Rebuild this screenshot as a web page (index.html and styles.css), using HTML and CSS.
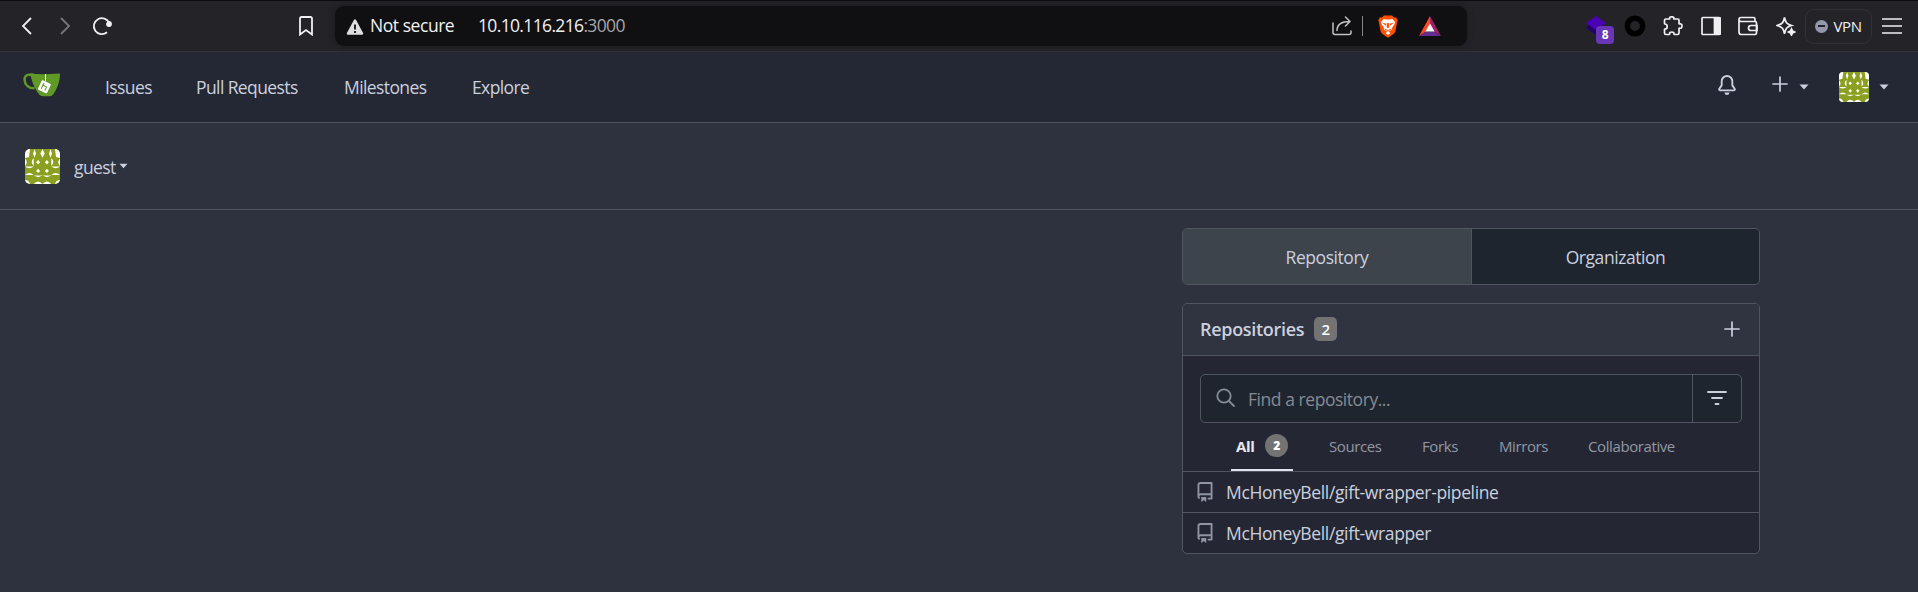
FILE: index.html
```html
<!DOCTYPE html>
<html lang="en">
<head>
<meta charset="utf-8">
<title>guest - Dashboard - Gitea</title>
<link rel="stylesheet" href="styles.css">
</head>
<body>
<svg class="defs" width="0" height="0">
  <symbol id="avatar" viewBox="0 0 35 35">
    <rect width="35" height="35" fill="#8ba021"/>
    <g fill="#fff">
      <path d="M0 0H5L4 8 0 9zM35 0H30L31 8 35 9zM9.500 0l1.500 4.500-1.500 4.300-1.500-4.300zM17.500 0l2.200 4.400-2.200 4.400-2.200-4.400zM25.500 0l1.500 4.500-1.500 4.300-1.500-4.300z"/>
      <path d="M0 9.500q3.500 3.500 0 7.500zM35 9.500q-3.500 3.500 0 7.500zM8.700 9q-4 4 0 8zM26.300 9q4 4 0 8zM0 17.500h8.700q-4.300 3.500-8.700 0zM26.300 17.500H35q-4.300 3.500-8.700 0z"/>
      <path d="M13.100 11l2 2.200-2 2.200-2-2.200zM21.900 11l2 2.200-2 2.200-2-2.200zM13.100 19.700l2 2.200-2 2.200-2-2.200zM21.900 19.700l2 2.200-2 2.200-2-2.200z"/>
      <path d="M0 26q4.400-4 8.700 0zM26.300 26q4.400-4 8.700 0zM8.700 26.500h8.800l-4.400 1.800zM17.500 26.500h8.800l-4.400 1.800zM0 31q4 0 5 4H0zM35 31q-4 0-5 4h5zM8.700 35q4.400-5 8.800 0zM17.500 35q4.400-5 8.800 0z"/>
    </g>
  </symbol>
  <symbol id="repo" viewBox="0 0 16 16"><path d="M2 2.500A2.500 2.500 0 0 1 4.500 0h8.750a.75.75 0 0 1 .75.750v12.500a.75.75 0 0 1-.75.750h-2.500a.75.75 0 0 1 0-1.500h1.750v-2h-8a1 1 0 0 0-.714 1.700.75.75 0 1 1-1.072 1.050A2.495 2.495 0 0 1 2 11.500Zm10.500-1h-8a1 1 0 0 0-1 1v6.708A2.486 2.486 0 0 1 4.500 9h8ZM5 12.250a.25.25 0 0 1 .25-.25h3.500a.25.25 0 0 1 .25.250v3.250a.25.25 0 0 1-.4.200l-1.450-1.087a.249.249 0 0 0-.3 0L5.400 15.700a.25.25 0 0 1-.4-.2Z"/></symbol>
  <symbol id="plus" viewBox="0 0 16 16"><path d="M8 1v14M1 8h14" stroke="currentColor" stroke-width="1.700" stroke-linecap="round"/></symbol>
  <symbol id="caret" viewBox="0 0 10 6"><path d="M.5.500h9L5 5.500z" fill="currentColor"/></symbol>
</svg>

<header class="browser">
  <div class="browser-nav">
    <svg class="back" width="12" height="20" viewBox="0 0 12 20"><path d="M10 2 2 10l8 8"/></svg>
    <svg class="forward" width="12" height="20" viewBox="0 0 12 20"><path d="m2 2 8 8-8 8"/></svg>
    <svg class="reload" width="22" height="22" viewBox="0 0 22 22"><path d="M16 17.300A8 8 0 1 1 18.200 8"/><circle cx="18" cy="9" r="2" fill="#f0f0f2"/></svg>
    <svg class="bookmark" width="16" height="20" viewBox="0 0 16 20"><path d="M3.500 1h9A1.500 1.500 0 0 1 14 2.500V18.500l-6-4.500-6 4.500v-16A1.500 1.500 0 0 1 3.500 1z"/></svg>
  </div>
  <div class="address">
    <svg class="warning" width="18" height="18" viewBox="0 0 18 18"><path d="M9 2.500 16 15.500H2z" fill="#dedee2" stroke="#dedee2" stroke-width="2.500" stroke-linejoin="round"/><path d="M9 6.500v5M9 13v2" stroke="#101012" stroke-width="1.800"/></svg>
    <span class="security">Not secure</span>
    <span class="url">10.10.116.216<span class="port">:3000</span></span>
    <div class="address-actions">
      <svg width="20" height="20" viewBox="0 0 20 20" fill="none" stroke="#c2c2c5" stroke-width="1.500" stroke-linecap="round" stroke-linejoin="round"><path d="M1 7v9.500Q1 18.500 3 18.500H17q2 0 2-2V15"/><path d="M5 14.500Q5 5.500 18 5.500M13.500 1 18 5.500 13.500 10"/></svg>
      <i class="separator"></i>
      <svg class="brave" width="20" height="23" viewBox="0 0 20 23"><path d="M6 .5h8l2 2 2-.2 1.700 3-.8 3-1.600 8.500-2 2.500L10 22.700l-5.300-3.400-2-2.500L1.100 8.300l-.8-3L2 2.300l2 .2z" fill="#ff5000"/><path d="m5.500 4 3 .5h3l3-.5 2.500 3-.5 2-2.500 4 .2 2-2 .5-2.200 1.500-2.200-1.500-2-.5.200-2-2.500-4L3 7zM7.500 18l2.500-1.500 2.500 1.500-2.500 2z" fill="#fff"/><path d="m4 7.500 4.500 1.200-.8 2zM16 7.500l-4.500 1.200.8 2zM9.200 8h1.600l.7 4-1.500 1.300L8.500 12z" fill="#ff5000"/><path d="M6.500 14 10 15.500l3.500-1.500" stroke="#ff5000" fill="none"/></svg>
      <svg class="bat" width="22" height="20" viewBox="0 0 22 20"><path d="M11 0 0 20l7-4.500 4-7z" fill="#ff4724"/><path d="m11 0 11 20-7-4.500-4-7z" fill="#9e1f63"/><path d="m0 20 7-4.500h8l7 4.500z" fill="#662d91"/><path d="m11 7.500 4.600 8H6.400z" fill="#fff"/></svg>
    </div>
  </div>
  <div class="extensions">
    <span class="layers"><svg width="20" height="20" viewBox="0 0 20 20"><path d="m0 12 3-3 7 3 7-3 3 3-10 7z" fill="#24006e"/><path d="m10 0 10 7-10 7L0 7z" fill="#4b02b4"/></svg><b>8</b></span>
    <svg width="22" height="22" viewBox="0 0 22 22"><circle cx="11" cy="11" r="7.700" fill="none" stroke="#000" stroke-width="5.500"/></svg>
    <svg class="line" width="20" height="20" viewBox="0 0 20 20"><path d="M3 3h3.500q.5 0 .3-.5C6.300 1 7.800.8 8.800.8s2.700.4 2 1.700q-.2.500.4.500H15q1 0 1 1v3.500q0 .5.500.4C18 7.400 19 8.500 19 10s-1 2.700-2.500 2.100q-.5-.1-.5.400V17q0 1.500-1.500 1.500h-3q-.5 0-.5-.5c.2-1.300-.8-2-2.200-2s-2.300.7-2.200 2q0 .5-.6.500H3q-1.500 0-1.500-1.500v-3.500q0-.5.500-.5c1.500 0 2.200-1 2.200-2.300S3.500 8 2 8q-.5 0-.5-.5v-3Q1.500 3 3 3z"/></svg>
    <svg class="line" width="20" height="20" viewBox="0 0 20 20"><rect x="1" y="1.500" width="18" height="17" rx="1"/><path d="M13.500 2H19v16h-5.500z" fill="#f0f0f2"/></svg>
    <svg class="line" width="20" height="20" viewBox="0 0 20 20"><path d="M17 6V3q0-1.500-1.500-1.500H3Q1 1.500 1 3.500V16q0 2.500 2.500 2.500h13.500q1.500 0 1.500-1.500V7q0-1.500-1.500-1.500H3q-2 0-2-2"/><path d="M19 9.500h-6a2.500 2.500 0 0 0 0 5h6z"/></svg>
    <svg class="line" width="20" height="20" viewBox="0 0 20 20"><path d="M8.500 1.500c1 5 2 6.500 7 8-5 1.500-6 3-7 8.300-1-5.300-2-6.800-7.500-8.300 5.500-1.500 6.500-3 7.500-8z"/><path d="m15.500 13 1 2 2 1-2 1-1 2-1-2-2-1 2-1z" fill="#f0f0f2"/></svg>
    <span class="vpn"><i></i>VPN</span>
    <svg class="line" width="20" height="18" viewBox="0 0 20 18"><path d="M0 2h20M0 9h20M0 16h20"/></svg>
  </div>
</header>

<nav class="navbar">
  <svg class="logo" width="38" height="24" viewBox="0 0 38 24"><path d="M11 1.800H6C2.800 1.800 1.400 4 1.600 7c.3 5 4 8.300 9.900 8.300" fill="none" stroke="#609926" stroke-width="2.500"/><path d="M7 .6Q18 1.800 36.500.6q.5 0 .5 1C36.500 10 34 16 30.500 21q-1.500 2.200-4 2.200H20q-2.500 0-4-2C11 15 8.500 7 7 .6z" fill="#609926"/><path d="M22.500 1v7" stroke="#fff"/><g transform="rotate(25 21.500 13.500)"><rect x="16.500" y="8.500" width="10" height="10.500" rx="1" fill="#fff"/><path d="M19.500 10.500v6.500M19.500 13h4v4" stroke="#609926" fill="none"/></g></svg>
  <a class="nav-issues">Issues</a><a class="nav-pulls">Pull Requests</a><a class="nav-miles">Milestones</a><a class="nav-explore">Explore</a>
  <div class="nav-right">
    <svg class="bell" width="20" height="20" viewBox="0 0 16 16" fill="currentColor"><path d="M8 16a2 2 0 0 0 1.985-1.750c.017-.137-.097-.25-.235-.25h-3.500c-.138 0-.252.113-.235.250A2 2 0 0 0 8 16ZM3 5a5 5 0 0 1 10 0v2.947c0 .05.015.098.042.139l1.703 2.555A1.519 1.519 0 0 1 13.482 13H2.518a1.516 1.516 0 0 1-1.263-2.360l1.703-2.554A.255.255 0 0 0 3 7.947Zm5-3.500A3.500 3.500 0 0 0 4.500 5v2.947c0 .346-.102.683-.294.970l-1.703 2.556a.017.017 0 0 0-.003.010l.001.006c0 .002.002.004.004.006l.006.004.007.001h10.964l.007-.001.006-.004.004-.006.001-.007a.017.017 0 0 0-.003-.010l-1.703-2.554a1.745 1.745 0 0 1-.294-.970V5A3.500 3.500 0 0 0 8 1.500Z"/></svg>
    <svg class="nav-plus" width="16" height="16"><use href="#plus"/></svg>
    <svg class="nav-caret" width="10" height="6"><use href="#caret"/></svg>
    <svg class="nav-avatar" width="30" height="30"><use href="#avatar"/></svg>
    <svg width="10" height="6"><use href="#caret"/></svg>
  </div>
</nav>

<div class="context">
  <svg class="context-avatar" width="35" height="35"><use href="#avatar"/></svg>
  <span class="context-name">guest</span>
  <svg width="9" height="6"><use href="#caret"/></svg>
</div>

<main class="dashboard">
  <div class="switcher">
    <a class="active"><span class="t-repository">Repository</span></a>
    <a><span class="t-organization">Organization</span></a>
  </div>
  <section class="panel">
    <div class="panel-head">
      <h4>Repositories</h4><span class="count">2</span>
      <svg width="16" height="16"><use href="#plus"/></svg>
    </div>
    <div class="panel-filter">
      <div class="search">
        <svg class="search-icon" width="19" height="19" viewBox="0 0 19 19"><circle cx="8" cy="8" r="6.700"/><path d="m13 13 5 5"/></svg>
        <span class="placeholder">Find a repository...</span>
        <span class="filter-button"><svg width="22" height="16" viewBox="0 0 22 16"><path d="M2 2h18M6 8h10M9.500 14h3"/></svg></span>
      </div>
      <div class="tabs">
        <a class="tab active"><span>All</span><b>2</b></a>
        <a class="tab t-sources">Sources</a>
        <a class="tab t-forks">Forks</a>
        <a class="tab t-mirrors">Mirrors</a>
        <a class="tab t-collab">Collaborative</a>
      </div>
    </div>
    <ul class="repos">
      <li><svg width="20" height="20"><use href="#repo"/></svg><span>McHoneyBell/gift-wrapper-pipeline</span></li>
      <li><svg width="20" height="20"><use href="#repo"/></svg><span>McHoneyBell/gift-wrapper</span></li>
    </ul>
  </section>
</main>
</body>
</html>
```
FILE: styles.css
```css
* { box-sizing: border-box; }
body {
  margin: 0;
  height: 592px;
  overflow: hidden;
  background: #2e323e;
  color: #cbd0df;
  font-family: "Open Sans", "Noto Sans", sans-serif;
  font-size: 17.5px;
  letter-spacing: -0.6px;
  white-space: nowrap;
}
svg { display: block; flex: none; }
.defs { position: absolute; }

/* Browser toolbar */
.browser {
  display: flex;
  align-items: center;
  height: 52px;
  background: #242328;
  border-top: 1px solid #0c0c0e;
  border-bottom: 1px solid #323237;
  color: #f1f1f3;
}
.browser-nav { display: flex; align-items: center; width: 335px; padding-left: 21px; }
.browser-nav svg { fill: none; stroke: #f0f0f2; stroke-width: 1.8; }
.forward { margin-left: 26px; }
.browser-nav .forward { stroke: #77767b; }
.reload { margin-left: 20px; }
.bookmark { margin-left: 185px; }
.address {
  display: flex;
  align-items: center;
  width: 1132px;
  height: 40px;
  padding-left: 11px;
  background: #101012;
  border-radius: 9px;
  box-shadow: 0 0 6px #19191c;
}
.warning { margin-top: 2px; }
.security { width: 108px; margin-left: 6px; letter-spacing: -0.45px; }
.url { letter-spacing: -0.65px; }
.port { color: #a5a5aa; }
.address > span { position: relative; top: -1px; }
.address-actions { display: flex; align-items: center; margin-left: auto; padding-right: 26px; }
.separator { width: 1px; height: 20px; margin: 0 15px 0 10px; background: #85858a; }
.bat { margin-left: 21px; }
.extensions { display: flex; align-items: center; justify-content: space-between; width: 316px; margin-left: 119px; }
.layers { position: relative; width: 20px; }
.layers b {
  position: absolute;
  left: 10px;
  top: 10px;
  width: 18px;
  height: 18px;
  border-radius: 4px;
  background: #6936b7;
  color: #fff;
  font-size: 12px;
  line-height: 18px;
  text-align: center;
}
.line { fill: none; stroke: #f0f0f2; stroke-width: 1.7; }
.vpn {
  display: flex;
  align-items: center;
  gap: 5px;
  width: 67px;
  height: 35px;
  margin: 0 -8px;
  padding-left: 9px;
  border: 1px solid #323137;
  border-radius: 9px;
  font-size: 15px;
  letter-spacing: -0.3px;
}
.vpn i { width: 13px; height: 13px; border-radius: 50%; background: linear-gradient(#242328, #242328) center / 7px 2px no-repeat #9498ad; }

/* Main navigation */
.navbar { display: flex; align-items: center; height: 71px; padding: 0 29px 0 23px; background: #242834; border-bottom: 1px solid #515563; }
.logo { margin-top: -4px; }
.nav-issues { width: 91px; margin-left: 44px; }
.nav-pulls { width: 148px; }
.nav-miles { width: 128px; }
.nav-right { display: flex; align-items: center; margin-left: auto; }
.bell { margin-top: -5px; }
.nav-plus { margin: -6px 0 0 35px; }
.nav-caret { margin-left: 11px; }
.nav-caret, .nav-avatar + svg { margin-top: -1px; }
.nav-avatar { margin: 0 10px 0 30px; border-radius: 4px; }

.context { display: flex; align-items: center; height: 87px; padding-left: 25px; border-bottom: 1px solid #515563; }
.context-avatar { border-radius: 5px; }
.context-name { width: 45px; margin: 1px 0 0 14px; }

/* Repository sidebar */
.dashboard { width: 578px; margin: 18px 0 0 1182px; }
.switcher { display: flex; height: 57px; border: 1px solid #515563; border-radius: 5px; overflow: hidden; background: #1f252f; }
.switcher a { display: flex; flex: 1; align-items: center; justify-content: center; padding-top: 1px; letter-spacing: -0.45px; }
.switcher .active { flex: 0 0 289px; background: #3d444c; border-right: 1px solid #515563; }
.panel { margin-top: 18px; border: 1px solid #515563; border-radius: 5px; overflow: hidden; background: #242733; }
.panel-head { display: flex; align-items: center; height: 52px; padding: 0 19px 2px 17px; background: #303440; border-bottom: 1px solid #515563; }
.panel-head h4 { width: 114px; margin: 0; font-size: 18px; font-weight: 600; letter-spacing: -0.3px; }
.panel-head svg { margin-left: auto; }
.count { width: 23px; height: 24px; border-radius: 5px; background: #737373; color: #fff; font-size: 15px; font-weight: 600; line-height: 24px; text-align: center; }
.panel-filter { padding: 18px 17px 0; }
.search { display: flex; align-items: center; height: 49px; padding-left: 15px; border: 1px solid #515563; border-radius: 5px; background: #1f252f; }
.search-icon { margin-top: -3px; fill: none; stroke: #878b98; stroke-width: 1.8; stroke-linecap: round; }
.placeholder { margin-left: 13px; color: #868a92; letter-spacing: -0.45px; }
.filter-button { display: flex; align-items: center; justify-content: center; width: 49px; height: 47px; padding-bottom: 1px; margin-left: auto; border-left: 1px solid #515563; }
.filter-button svg { fill: none; stroke: #cbd0df; stroke-width: 1.8; stroke-linecap: round; }
.tabs { display: flex; height: 48px; padding-left: 31px; color: #9297a5; font-size: 15px; letter-spacing: -0.4px; }
.tab { display: flex; align-items: center; height: 48px; padding-bottom: 2px; }
.tab.active { width: 62px; padding: 0 0 1px 5px; border-bottom: 2px solid #dfe2ec; color: #e6e8f0; font-weight: 700; }
.tab.active span { width: 29px; }
.tab b { width: 23px; height: 23px; border-radius: 50%; background: #737373; color: #fff; font-size: 12px; line-height: 23px; text-align: center; }
.t-sources { margin-left: 36px; width: 93px; }
.t-forks { width: 77px; }
.t-mirrors { width: 89px; }
.repos { margin: 0; padding: 0; list-style: none; }
.repos li { display: flex; align-items: center; height: 41px; padding-left: 12px; border-top: 1px solid #515563; letter-spacing: -0.36px; }
.repos svg { margin-right: 11px; fill: #8f94a3; }
```
